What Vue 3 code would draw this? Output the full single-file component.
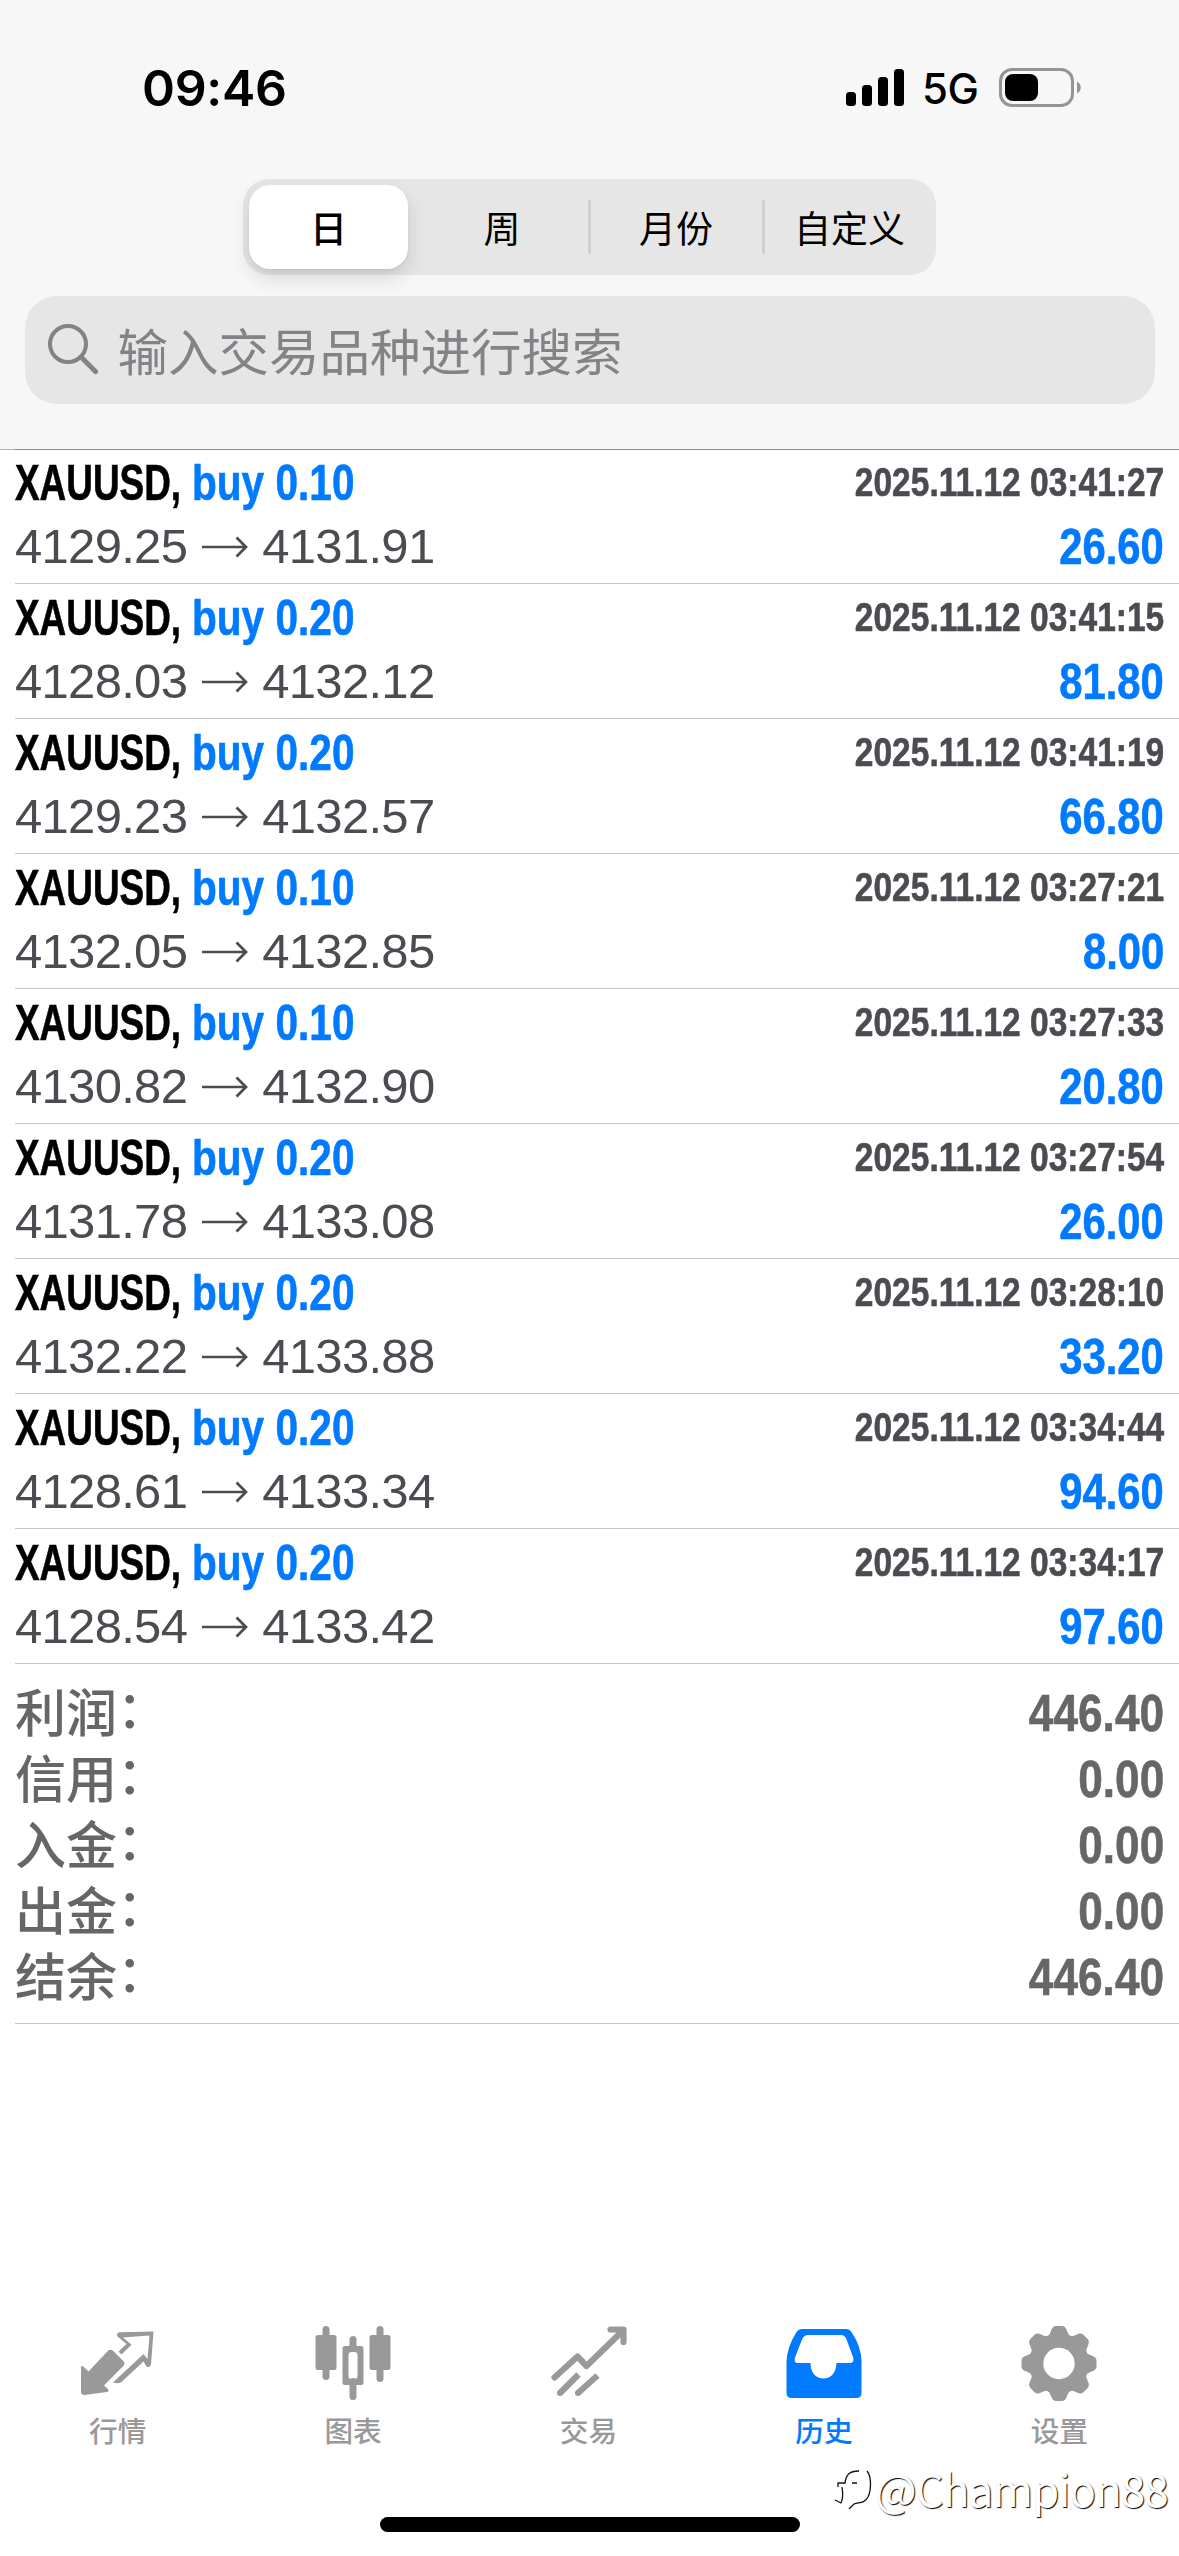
<script setup>
const periods = ['日', '周', '月份', '自定义']

const deals = [
  { volume: '0.10', time: '03:41:27', open: '4129.25', close: '4131.91', profit: '26.60' },
  { volume: '0.20', time: '03:41:15', open: '4128.03', close: '4132.12', profit: '81.80' },
  { volume: '0.20', time: '03:41:19', open: '4129.23', close: '4132.57', profit: '66.80' },
  { volume: '0.10', time: '03:27:21', open: '4132.05', close: '4132.85', profit: '8.00' },
  { volume: '0.10', time: '03:27:33', open: '4130.82', close: '4132.90', profit: '20.80' },
  { volume: '0.20', time: '03:27:54', open: '4131.78', close: '4133.08', profit: '26.00' },
  { volume: '0.20', time: '03:28:10', open: '4132.22', close: '4133.88', profit: '33.20' },
  { volume: '0.20', time: '03:34:44', open: '4128.61', close: '4133.34', profit: '94.60' },
  { volume: '0.20', time: '03:34:17', open: '4128.54', close: '4133.42', profit: '97.60' },
]

const totals = [
  { label: '利润', value: '446.40' },
  { label: '信用', value: '0.00' },
  { label: '入金', value: '0.00' },
  { label: '出金', value: '0.00' },
  { label: '结余', value: '446.40' },
]
</script>

<template>
  <div class="screen">
    <header class="header">
      <div class="status">
        <span class="clock">09:46</span>
        <svg class="signal" width="58" height="38" viewBox="0 0 58 38">
          <rect x="0" y="23" width="10" height="14" rx="3.5" />
          <rect x="16" y="16" width="10" height="21" rx="3.5" />
          <rect x="32" y="8" width="10" height="29" rx="3.5" />
          <rect x="48" y="0" width="10" height="37" rx="3.5" />
        </svg>
        <span class="network">5G</span>
        <svg class="battery" width="83" height="40" viewBox="0 0 83 40">
          <rect x="1.5" y="1.5" width="72" height="36" rx="11.5" fill="none" stroke="#949494" stroke-width="3" />
          <rect x="6" y="6" width="33" height="27" rx="8" />
          <path d="M78 13.500C83 16 83 23 78 25.500Z" fill="#949494" />
        </svg>
      </div>
      <div class="segments">
        <button v-for="(p, i) in periods" :key="p" class="segment" :class="{ active: i === 0 }">{{ p }}</button>
      </div>
      <div class="search">
        <svg width="52" height="52" viewBox="0 0 52 52" fill="none" stroke="#838387" stroke-width="4">
          <circle cx="21" cy="21" r="18" />
          <path d="M34 34L48.500 48.500" stroke-width="5" stroke-linecap="round" />
        </svg>
        <span>输入交易品种进行搜索</span>
      </div>
    </header>

    <main class="list">
      <article v-for="d in deals" :key="d.time" class="deal">
        <div class="line top">
          <span class="symbol"><b>XAUUSD,</b></span>
          <span class="side"><b>buy {{ d.volume }}</b></span>
          <span class="time"><b>2025.11.12 {{ d.time }}</b></span>
        </div>
        <div class="line bottom">
          <span class="price">{{ d.open }}</span>
          <svg class="arrow" width="46" height="22" viewBox="0 0 46 22" fill="none" stroke="#4c4b51" stroke-width="2.700">
            <path d="M0 11H44M34.500 1.500L44 11L34.500 20.500" />
          </svg>
          <span class="price">{{ d.close }}</span>
          <span class="profit"><b>{{ d.profit }}</b></span>
        </div>
      </article>

      <section class="totals">
        <div v-for="t in totals" :key="t.label" class="total">
          <span class="label">{{ t.label }}</span>
          <span class="colon">：</span>
          <span class="value"><b>{{ t.value }}</b></span>
        </div>
      </section>
    </main>

    <nav class="tabs">
      <a class="tab">
        <svg width="80" height="80" viewBox="0 0 80 80" fill="#999">
          <path d="M30.300 24.600Q32.500 23 34.800 24.600L45.500 35.200Q47.500 37.500 45.500 39.800L26 59.500L30.500 63.500Q31 65.500 29 66L6.500 69Q3 69 3 66V40Q5.500 40 6.500 41.500L10.500 45.500Z" />
          <path d="M40.500 25.500L48.500 18L39.500 10.500Q38 7 41.500 6.200L75.500 5.500L73 38.500Q71.500 42.500 68.500 40.500L65.500 35.500L43.500 56Q41 58 35 56.500L65.500 28L69.500 33L71.500 9.500L45 11.500L53.500 18.800L43.500 28.500Z" />
        </svg>
        <span>行情</span>
      </a>
      <a class="tab">
        <svg width="80" height="80" viewBox="0 0 80 80" fill="#999">
          <rect x="9.500" y="0" width="7" height="54" rx="3.500" />
          <rect x="2.500" y="9" width="21" height="35" rx="2.500" />
          <rect x="63.500" y="0" width="7" height="56" rx="3.500" />
          <rect x="56.500" y="9" width="21" height="35" rx="2.500" />
          <rect x="36.500" y="10" width="7" height="16" rx="3.500" />
          <rect x="36.500" y="52" width="7" height="22" rx="3.500" />
          <path fill-rule="evenodd" d="M32 20H48Q50.500 20 50.500 22.500V56.500Q50.500 59 48 59H32Q29.500 59 29.500 56.500V22.500Q29.500 20 32 20ZM38.500 26Q35.500 26 35.500 29V50Q35.500 53 38.500 53H41.500Q44.500 53 44.500 50V29Q44.500 26 41.500 26Z" />
        </svg>
        <span>图表</span>
      </a>
      <a class="tab">
        <svg width="80" height="80" viewBox="0 0 80 80" fill="none" stroke="#999" stroke-width="6.200" stroke-linejoin="round">
          <path d="M5.500 51.500L28.500 30.500L37.500 40L74 4.500M61.500 3.500H74.500V16" stroke-linecap="round" />
          <path d="M29.500 48.500L11 67M48.500 49.500L29 67" />
          <circle cx="11" cy="67" r="3" fill="#999" stroke="none" />
          <circle cx="29" cy="67" r="3" fill="#999" stroke="none" />
        </svg>
        <span>交易</span>
      </a>
      <a class="tab current">
        <svg width="80" height="80" viewBox="0 0 80 80" fill="#007aff">
          <path fill-rule="evenodd" d="M18 3H62Q65.500 3 67.500 6Q77.500 21 77.500 36V66.500Q77.500 72 72 72H8Q2.500 72 2.500 66.500V36Q3 21 12.500 6Q14.500 3 18 3ZM24 9Q20 9 18 13.500L11 31.500Q9.500 37 14 37H26.500C26.500 47 32 52.500 39.500 52.500C47 52.500 52 47 52.500 37H66Q71 36.500 69 31L62.500 13.500Q61 9 57 9Z" />
        </svg>
        <span>历史</span>
      </a>
      <a class="tab">
        <svg width="80" height="80" viewBox="0 0 80 80" fill="#999">
          <mask id="gear-hole">
            <rect width="80" height="80" fill="#fff" />
            <circle cx="40" cy="37.500" r="15.700" fill="#000" />
          </mask>
          <g mask="url(#gear-hole)">
            <circle cx="40" cy="37.500" r="30" />
            <path
              v-for="n in 8"
              :key="n"
              d="M28 11Q30.500 9.500 32 5Q33.500 0 37 0H43Q46.500 0 48 5Q49.500 9.500 52 11L48 20H32Z"
              :transform="`rotate(${n * 45} 40 37.5)`"
            />
          </g>
        </svg>
        <span>设置</span>
      </a>
    </nav>

    <div class="home-bar"></div>

    <div class="watermark">
      <svg width="42" height="46" viewBox="0 0 42 46" fill="none" stroke-width="1.300" stroke="#111">
        <path d="M2 35L8 38C10 34 10 28 9 22M5 22V18H12C13 10 16 6 26 6M19 18H24" />
        <path d="M34 6C39 12 38 26 35 32C31 39 26 37 21 39L16 44" />
      </svg>
      <span>@Champion88</span>
    </div>
  </div>
</template>

<style>
body {
  background: #fff;
}
</style>

<style scoped>
.screen {
  position: relative;
  display: flex;
  flex-direction: column;
  width: 1179px;
  height: 2556px;
  overflow: hidden;
  background: #fff;
  font-family: "Liberation Sans", "Noto Sans CJK SC", sans-serif;
  box-sizing: border-box;
}
.screen * {
  box-sizing: border-box;
}
.header {
  position: relative;
  flex: none;
  display: flex;
  flex-direction: column;
  align-items: center;
  height: 450px;
  margin-bottom: -1px;
  background: #f7f7f7;
}
.header::after {
  content: "";
  position: absolute;
  left: 0;
  right: 0;
  bottom: 0;
  height: 1px;
  background: linear-gradient(to right, #b2b2b2 15px, #8b8b8b 15px);
}
.status {
  display: flex;
  align-items: center;
  align-self: stretch;
  height: 179px;
  padding: 0 97px 4px 142px;
}
.clock {
  flex: 1;
  font: 600 50px/60px Inter, sans-serif;
  letter-spacing: -.3px;
}
.network {
  width: 95px;
  padding-left: 18px;
  padding-top: 2px;
  font: 500 42px/50px Inter, sans-serif;
  letter-spacing: -.5px;
}
.segments {
  display: flex;
  width: 693px;
  height: 96px;
  padding: 6px;
  border-radius: 26px;
  background: #e6e6e6;
}
.segment {
  position: relative;
  flex: none;
  width: 174px;
  padding: 0;
  border: 0;
  border-radius: 21px;
  background: none;
  font: 500 37px/80px "Noto Sans CJK SC", sans-serif;
  text-align: center;
  color: #000;
}
.segment.active {
  width: 159px;
  margin-right: 7px;
  background: #fff;
  box-shadow: 0 9px 20px rgba(0, 0, 0, .13), 0 2px 3px rgba(0, 0, 0, .04);
}
.segment:nth-child(n+2) {
  font-weight: 400;
}
.segment:last-child {
  width: 173px;
}
.segment:nth-child(n+3)::before {
  content: "";
  position: absolute;
  left: -1px;
  top: 15px;
  width: 3px;
  height: 54px;
  border-radius: 2px;
  background: #d0d0d2;
}
.search {
  display: flex;
  align-items: center;
  width: 1130px;
  height: 108px;
  margin-top: 21px;
  padding: 0 0 2px 22px;
  border-radius: 32px;
  background: #e6e6e7;
  color: #838387;
  font: 400 50.500px/106px "Noto Sans CJK SC", sans-serif;
}
.search span {
  margin-left: 19px;
}
.list {
  flex: none;
}
.deal {
  height: 135px;
  margin-left: 15px;
  border-bottom: 1px solid #c6c6c8;
}
.line {
  display: flex;
  align-items: center;
  padding-right: 15px;
  white-space: nowrap;
}
.top {
  height: 69px;
  line-height: 69px;
}
.bottom {
  height: 57px;
  line-height: 57px;
}
b {
  display: inline-block;
  transform: scaleX(.82);
  transform-origin: left center;
  -webkit-text-stroke: .6px currentColor;
}
.symbol,
.side {
  font-size: 50px;
}
.symbol {
  width: 177px;
}
.symbol b {
  transform: scaleX(.738);
}
.side {
  width: 200px;
  color: #007aff;
}
.side b {
  transform: scaleX(.812);
}
.time,
.profit,
.value {
  margin-left: auto;
}
.time b,
.profit b,
.value b {
  transform-origin: right center;
}
.time {
  padding-bottom: 3px;
  color: #4c4b51;
  font-size: 40px;
  line-height: 66px;
}
.time b {
  transform: scaleX(.838);
}
.profit {
  color: #007aff;
  font-size: 49.500px;
}
.profit b {
  transform: scaleX(.845);
}
.price {
  font-size: 49px;
  letter-spacing: -.7px;
  color: #4c4b51;
}
.arrow {
  margin: 0 14px 0 15px;
}
.totals {
  height: 360px;
  margin-left: 15px;
  padding: 16px 15px 0 0;
  border-bottom: 1px solid #c6c6c8;
  color: #666;
}
.total {
  display: flex;
  height: 66px;
  line-height: 66px;
}
.label,
.colon {
  margin-top: -3px;
  font: 500 51px/66px "Noto Sans CJK SC", sans-serif;
}
.colon {
  margin-top: -7px;
}
.value {
  font-size: 52px;
}
.value b {
  transform: scaleX(.85);
}
.tabs {
  display: flex;
  width: 1177px;
  margin-top: 302px;
}
.tab {
  flex: 1;
  display: flex;
  flex-direction: column;
  align-items: center;
  color: #999;
  font: 500 28.700px/40px "Noto Sans CJK SC", sans-serif;
}
.tab span {
  margin-top: 4px;
}
.current {
  color: #007aff;
}
.home-bar {
  position: absolute;
  left: 380px;
  top: 2517px;
  width: 420px;
  height: 15px;
  border-radius: 8px;
  background: #000;
}
.watermark {
  position: absolute;
  left: 833px;
  top: 2463px;
  display: flex;
  align-items: center;
  color: #fff;
  font: 400 44px/50px "Noto Sans CJK SC", sans-serif;
  letter-spacing: -1px;
  white-space: nowrap;
  text-shadow: 1px 1px 1px #000;
}
</style>
